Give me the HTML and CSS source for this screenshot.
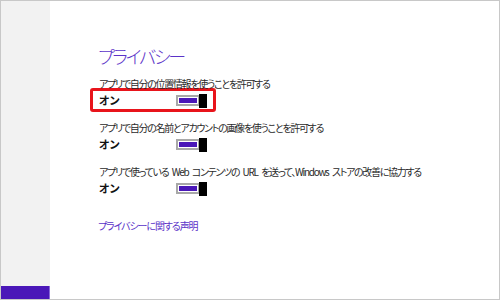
FILE: index.html
```html
<!DOCTYPE html>
<html>

<head>
	<meta charset="utf-8">
	<title>プライバシー</title>

	<link rel="stylesheet" href="styles.css">
</head>

<body>

	<div class="screen">
		<div class="side">
			<div class="side-mark"></div>
		</div>

		<div class="main">
			<h1 class="title">プライバシー</h1>

			<div class="setting">
				<p class="label">アプリで自分の位置情報を使うことを許可する</p>
				<div class="row highlight">
					<b class="state">オン</b>
					<span class="toggle"><span class="thumb"></span></span>
				</div>
			</div>

			<div class="setting">
				<p class="label">アプリで自分の名前とアカウントの画像を使うことを許可する</p>
				<div class="row">
					<b class="state">オン</b>
					<span class="toggle"><span class="thumb"></span></span>
				</div>
			</div>

			<div class="setting">
				<p class="label">アプリで使っている Web コンテンツの URL を送って、Windows ストアの改善に協力する</p>
				<div class="row">
					<b class="state">オン</b>
					<span class="toggle"><span class="thumb"></span></span>
				</div>
			</div>

			<a class="link" href="#">プライバシーに関する声明</a>
		</div>
	</div>

</body>

</html>
```

FILE: styles.css
```css
body {
	margin: 0;
	font-family: "Noto Sans CJK JP", "Noto Sans", sans-serif;
	font-feature-settings: "palt";
	color: #222;
}

.screen {
	width: 500px;
	height: 300px;
	box-sizing: border-box;
	border: 1px solid #c8c8c8;
	display: flex;
	background: white;
}

.side {
	width: 49px;
	background-color: #f2f2f2;
	display: flex;
	flex-direction: column;
	justify-content: flex-end;
}

.side-mark {
	height: 13px;
	background-color: #4a17b8;
	border-right: 1px solid #8a6ad8;
}

.main {
	flex: 1;
	padding: 43px 0 0 48px;
}

.title {
	margin: 0 0 9px 0;
	font-size: 18px;
	font-weight: 300;
	letter-spacing: -2.2px;
	color: #5b33c8;
	line-height: 24px;
}

.setting {
	margin-bottom: 12px;
}

.label {
	margin: 0;
	padding-left: 1px;
	font-size: 10px;
	line-height: 14px;
	letter-spacing: -1.3px;
	word-spacing: 2.5px;
	color: #2a2a2a;
}

.row {
	display: flex;
	align-items: center;
	height: 18px;
	width: 114px;
	margin: -3px 0 -3px -8px;
	padding-left: 6px;
	border: 3px solid transparent;
}

.highlight {
	border-color: #e8141b;
	border-radius: 3px;
}

.state {
	font-size: 11px;
	width: 77px;
	color: #111;
}

.toggle {
	position: relative;
	width: 18px;
	height: 5px;
	border: 2px solid #a8a8a8;
	padding: 1px;
	background-color: #4a17b8;
	background-clip: content-box;
}

.thumb {
	position: absolute;
	top: -3px;
	left: 21px;
	width: 8px;
	height: 14px;
	background-color: #000;
}

.link {
	display: inline-block;
	margin-top: 9px;
	font-size: 10px;
	line-height: 16px;
	color: #5b33c8;
	text-decoration: none;
	letter-spacing: -1.1px;
}
```
